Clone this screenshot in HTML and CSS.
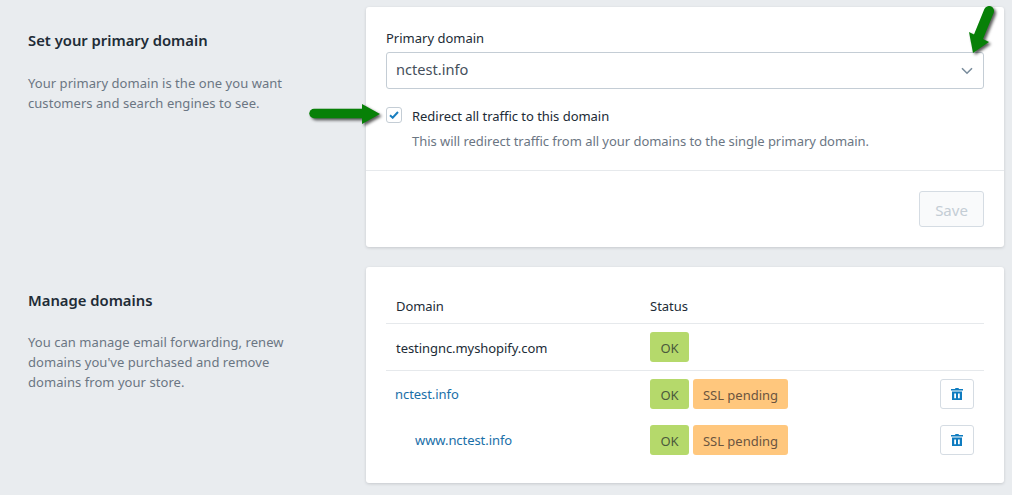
FILE: index.html
```html
<!DOCTYPE html>
<html lang="en">
<head>
<meta charset="utf-8">
<title>Domains</title>
<link rel="stylesheet" href="styles.css">
</head>
<body>
<main class="page">
  <section class="row row-primary">
    <div class="intro">
      <h2>Set your primary domain</h2>
      <p>Your primary domain is the one you want<br>customers and search engines to see.</p>
    </div>
    <div class="card">
      <div class="card-body">
        <label class="field-label">Primary domain</label>
        <div class="select">
          <span>nctest.info</span>
          <svg class="chevron" width="12" height="8" viewBox="0 0 12 8"><path d="M1 1.2l5 5 5-5" fill="none" stroke="#798c9c" stroke-width="1.6"/></svg>
        </div>
        <div class="check-row">
          <span class="checkbox"><svg width="10" height="8" viewBox="0 0 10 8"><path d="M1 4.2l2.7 2.5L9 1" fill="none" stroke="#1a7fc0" stroke-width="2"/></svg></span>
          <span class="check-label">Redirect all traffic to this domain</span>
        </div>
        <p class="help">This will redirect traffic from all your domains to the single primary domain.</p>
      </div>
      <div class="card-foot"><button class="save" disabled>Save</button></div>
    </div>
  </section>
  <section class="row row-manage">
    <div class="intro">
      <h2>Manage domains</h2>
      <p>You can manage email forwarding, renew<br>domains you've purchased and remove<br>domains from your store.</p>
    </div>
    <div class="card card-table">
      <div class="thead"><span class="col-domain">Domain</span><span>Status</span></div>
      <div class="trow trow-main">
        <span class="col-domain plain">testingnc.myshopify.com</span>
        <span class="badge ok">OK</span>
      </div>
      <div class="group">
        <div class="trow">
          <a class="col-domain top-link">nctest.info</a>
          <span class="badge ok">OK</span><span class="badge ssl">SSL pending</span>
          <button class="trash"><svg width="12" height="12" viewBox="0 0 12 12"><path d="M4.5 0h3l.5 1h4v1.6H0V1h4zM1 3.6h10V12H1zM3.2 5.4v4.8h1.8V5.4zM7 5.4v4.8h1.8V5.4z" fill="#0f7cc0" fill-rule="evenodd"/></svg></button>
        </div>
        <div class="trow">
          <a class="col-domain sub">www.nctest.info</a>
          <span class="badge ok">OK</span><span class="badge ssl">SSL pending</span>
          <button class="trash"><svg width="12" height="12" viewBox="0 0 12 12"><path d="M4.5 0h3l.5 1h4v1.6H0V1h4zM1 3.6h10V12H1zM3.2 5.4v4.8h1.8V5.4zM7 5.4v4.8h1.8V5.4z" fill="#0f7cc0" fill-rule="evenodd"/></svg></button>
        </div>
      </div>
    </div>
  </section>
</main>
<svg class="arrow arrow-right" width="84" height="30" viewBox="0 0 84 30"><path d="M9 13.5H60" fill="none" stroke="#078007" stroke-width="9.5" stroke-linecap="round"/><path d="M57 4L75 14 57 24z" fill="#078007"/></svg>
<svg class="arrow arrow-down" width="40" height="60" viewBox="0 0 40 60"><path d="M29 11L18 38" fill="none" stroke="#078007" stroke-width="10" stroke-linecap="round"/><path d="M9 32L29 42 13 53z" fill="#078007"/></svg>
</body>
</html>
```
FILE: styles.css
```css
* { box-sizing: border-box; }
html, body { margin: 0; height: 495px; overflow: hidden; }
body {
  background: #e9ecef;
  color: #212b36;
  font-family: "Noto Sans", "Open Sans", sans-serif;
  font-size: 13px;
  position: relative;
}
.page { padding: 7px 8px 0 28px; display: flex; flex-direction: column; gap: 20px; }
.row { display: flex; }
.intro { width: 338px; flex: none; }
.intro h2 { margin: 0; font-size: 14.8px; font-weight: 600; line-height: 20px; padding-top: 23px; color: #212b36; }
.intro p { margin: 23px 0 0; font-size: 13px; line-height: 20px; letter-spacing: .05px; color: #6b7683; }
.row-manage .intro p { margin-top: 22px; }
.card { flex: 1; background: #fff; border-radius: 3px; box-shadow: 0 1px 3px rgba(63,63,68,.2); }
.card-body { padding: 21px 20px 0; height: 164px; border-bottom: 1px solid #e6e9ec; }
.field-label { display: block; line-height: 20px; }
.select { margin-top: 4px; height: 37px; border: 1px solid #c4cdd5; border-radius: 3px; padding: 0 10px 4px 9px; display: flex; align-items: center; justify-content: space-between; font-size: 14.6px; color: #454f5b; }
.chevron { margin-top: 4px; }
.check-row { display: flex; align-items: center; margin-top: 16px; height: 20px; }
.checkbox { width: 16px; height: 16px; border: 1px solid #c4cdd5; border-radius: 3px; display: flex; align-items: center; justify-content: center; margin-right: 10px; }
.check-label { padding-top: 2px; letter-spacing: -.03px; }
.help { margin: 6px 0 0 26px; line-height: 20px; letter-spacing: -.04px; color: #6b7683; }
.card-foot { padding: 20px; display: flex; justify-content: flex-end; }
.save { width: 65px; height: 36px; background: #f9fafb; border: 1px solid #d5dce3; border-radius: 3px; color: #c4cdd5; font: inherit; font-size: 15px; padding: 2px 0 0; }
.card-table { padding: 20px 20px 0; height: 216px; }
.thead { display: flex; height: 37px; align-items: center; border-bottom: 1px solid #e6e9ec; padding-top: 2px; }
.col-domain { width: 264px; padding-left: 10px; flex: none; letter-spacing: -.06px; }
.trow { display: flex; align-items: center; position: relative; height: 46px; }
.trow-main { height: 47px; border-bottom: 1px solid #e6e9ec; }
.plain { color: #212b36; padding-top: 2px; }
a { color: #1a6fa8; }
.top-link { padding-left: 9px; }
.sub { padding-left: 29px; }
.badge { height: 30px; border-radius: 3px; display: inline-flex; align-items: center; justify-content: center; padding: 2px 0 0; margin-right: 4px; color: #4b5a3c; white-space: nowrap; }
.ok { background: #b5d96b; width: 39px; }
.ssl { background: #ffc77d; color: #6b5540; width: 95px; }
.trash { margin-left: auto; margin-right: 10px; width: 34px; height: 30px; background: #fff; border: 1px solid #d5dce3; border-radius: 3px; display: flex; align-items: center; justify-content: center; padding: 0; }
.arrow { position: absolute; filter: drop-shadow(2px 2px 1.5px rgba(0,0,0,.65)); }
.arrow-right { left: 305px; top: 100px; }
.arrow-down { left: 960px; top: 0; }
```
